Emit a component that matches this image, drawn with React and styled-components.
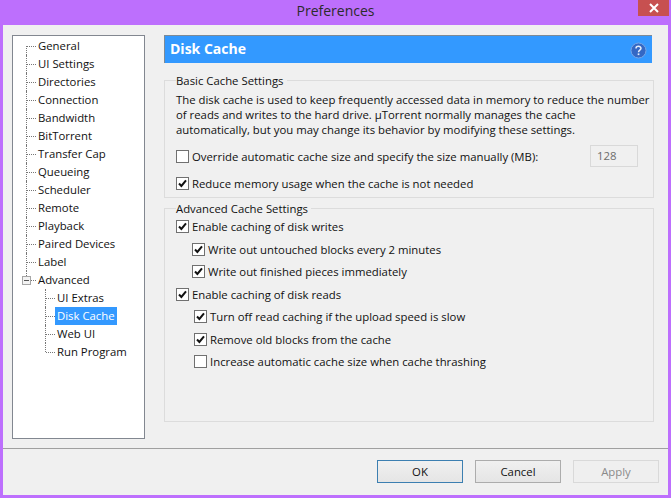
import React from "react"
import styled, { createGlobalStyle } from "styled-components"

const GlobalStyle = createGlobalStyle`
  html, body {
    margin: 0;
    padding: 0;
    background: #bd6ffd;
  }
  body {
    font-family: "Open Sans", "Noto Sans", sans-serif;
    font-size: 11.35px;
    color: #111;
  }
`

const Frame = styled.div`
  width: 671px;
  height: 498px;
  padding: 0 3px 3px 3px;
  box-sizing: border-box;
  display: flex;
  flex-direction: column;
  overflow: hidden;
`
const TitleBar = styled.div`
  height: 25px;
  flex: none;
  display: flex;
  align-items: flex-start;
  justify-content: center;
  position: relative;
`
const Title = styled.div`
  font-size: 14px;
  line-height: 22px;
  color: #2b2b2b;
`
const CloseButton = styled.div`
  position: absolute;
  right: -1px;
  top: 0;
  width: 31px;
  height: 16px;
  background: #c75050;
  display: flex;
  align-items: center;
  justify-content: center;
`
const Client = styled.div`
  flex: 1;
  min-height: 0;
  background: #f0f0f0;
  display: flex;
  flex-direction: column;
`
const Body = styled.div`
  flex: 1;
  min-height: 0;
  display: flex;
  padding: 10px 14px 0 9px;
  gap: 19px;
`
const Tree = styled.div`
  width: 131px;
  height: 401px;
  flex: none;
  box-sizing: content-box;
  border: 1px solid #828790;
  background: #fff;
  padding-top: 1px;
`
const TreeRow = styled.div`
  position: relative;
  height: 18px;
  line-height: 18px;
  display: flex;
  align-items: center;
  padding-left: ${p => (p.$child ? 42 : 23)}px;
  white-space: nowrap;
`
const RowLines = styled.span`
  position: absolute;
  left: ${p => (p.$child ? 32 : 13)}px;
  top: ${p => (p.$first ? 9 : 0)}px;
  height: ${p => (p.$first || p.$last ? 9 : 18)}px;
  border-left: 1px dotted #777;
  &::after {
    content: "";
    position: absolute;
    left: 0;
    top: ${p => (p.$first ? 0 : 9)}px;
    width: 9px;
    border-top: 1px dotted #777;
  }
`
const Expander = styled.span`
  position: absolute;
  left: 9px;
  top: 5px;
  width: 7px;
  height: 7px;
  border: 1px solid #a6a6a6;
  background: #f3f3f3;
  &::after {
    content: "";
    position: absolute;
    left: 1px;
    top: 3px;
    width: 5px;
    height: 1px;
    background: #555;
  }
`
const TreeLabel = styled.span`
  padding: 0 2px;
  line-height: 18px;
  background: ${p => (p.$selected ? "#3399ff" : "transparent")};
  color: ${p => (p.$selected ? "#fff" : "#111")};
`
const Main = styled.div`
  flex: 1;
  min-width: 0;
  display: flex;
  flex-direction: column;
`
const Header = styled.div`
  height: 28px;
  width: 488px;
  box-sizing: border-box;
  border-top: 1px solid #7d8a96;
  border-left: 1px solid #7d8a96;
  background: #3399ff;
  color: #fff;
  font-weight: 700;
  font-size: 14px;
  display: flex;
  align-items: center;
  justify-content: space-between;
  padding: 0 5px 2px 5px;
`
const HelpBadge = styled.svg`
  margin-bottom: -3px;
`
const Group = styled.fieldset`
  margin: ${p => p.$top}px 0 0 0;
  padding: 0 0 0 11px;
  width: 490px;
  height: ${p => p.$height}px;
  box-sizing: border-box;
  border: 1px solid #dcdcdc;
  min-inline-size: 0;
`
const Legend = styled.legend`
  padding: 2px 3px 0 0;
  margin-left: 0;
  line-height: 14px;
`
const Description = styled.p`
  margin: 4px 0 0;
  line-height: 15px;
  width: 476px;
`
const CheckRow = styled.label`
  display: flex;
  align-items: center;
  height: 16px;
  margin-top: ${p => p.$gap}px;
  margin-left: ${p => p.$indent || 0}px;
  gap: 3px;
  white-space: nowrap;
`
const Box = styled.span`
  width: 11px;
  height: 11px;
  flex: none;
  border: 1px solid #707070;
  background: #fff;
  display: flex;
  align-items: center;
  justify-content: center;
`
const SizeInput = styled.span`
  width: 48px;
  height: 22px;
  box-sizing: border-box;
  margin-left: auto;
  margin-right: 15px;
  border: 1px solid #d9d9d9;
  background: #f0f0f0;
  color: #6d6d6d;
  padding-left: 6px;
  line-height: 20px;
`
const Footer = styled.div`
  height: 47px;
  flex: none;
  box-sizing: border-box;
  border-top: 1px solid #a0a0a0;
  display: flex;
  justify-content: flex-end;
  gap: 12px;
  padding: 11px 9px 0 0;
`
const Button = styled.div`
  width: 86px;
  height: 23px;
  box-sizing: border-box;
  border: 1px solid ${p => (p.$default ? "#3c7fb1" : p.$disabled ? "#d9d9d9" : "#acacac")};
  background: ${p => (p.$disabled ? "#efefef" : "linear-gradient(#f0f0f0, #e5e5e5)")};
  color: ${p => (p.$disabled ? "#8a8a8a" : "#111")};
  display: flex;
  align-items: center;
  justify-content: center;
`

const CheckMark = () => (
  <svg width="9" height="9" viewBox="0 0 9 9">
    <path d="M1 4.5 L3.4 7 L8 1.4" fill="none" stroke="#111" strokeWidth="2" />
  </svg>
)

const HelpIcon = () => (
  <HelpBadge width="17" height="17" viewBox="0 0 17 17">
    <circle cx="8.5" cy="8.5" r="7.5" fill="#3468c4" stroke="#78a6e6" />
    <path d="M6 6.4 C6 3.6 11 3.6 11 6.3 C11 8.2 8.5 8 8.5 10.2" fill="none" stroke="#e6eefa" strokeWidth="1.5" />
    <rect x="7.7" y="11.4" width="1.7" height="1.7" fill="#e6eefa" />
  </HelpBadge>
)

const Check = ({ checked, indent, gap, children }) => (
  <CheckRow $indent={indent} $gap={gap}>
    <Box>{checked && <CheckMark />}</Box>
    <span>{children}</span>
  </CheckRow>
)

const topItems = [
  "General", "UI Settings", "Directories", "Connection", "Bandwidth", "BitTorrent",
  "Transfer Cap", "Queueing", "Scheduler", "Remote", "Playback", "Paired Devices", "Label",
]
const advancedItems = ["UI Extras", "Disk Cache", "Web UI", "Run Program"]

export default function App() {
  return (
    <>
      <GlobalStyle />
      <Frame>
        <TitleBar>
          <Title>Preferences</Title>
          <CloseButton>
            <svg width="10" height="10" viewBox="0 0 10 10">
              <path d="M1 1 L9 9 M9 1 L1 9" stroke="#fff" strokeWidth="2" />
            </svg>
          </CloseButton>
        </TitleBar>
        <Client>
          <Body>
            <Tree>
              {topItems.map((item, i) => (
                <TreeRow key={item}>
                  <RowLines $first={i === 0} />
                  <TreeLabel>{item}</TreeLabel>
                </TreeRow>
              ))}
              <TreeRow>
                <RowLines $last />
                <Expander />
                <TreeLabel>Advanced</TreeLabel>
              </TreeRow>
              {advancedItems.map((item, i) => (
                <TreeRow key={item} $child>
                  <RowLines $child $last={i === advancedItems.length - 1} />
                  <TreeLabel $selected={item === "Disk Cache"}>{item}</TreeLabel>
                </TreeRow>
              ))}
            </Tree>
            <Main>
              <Header>
                <span>Disk Cache</span>
                <HelpIcon />
              </Header>
              <Group $top={9} $height={126}>
                <Legend>Basic Cache Settings</Legend>
                <Description>
                  The disk cache is used to keep frequently accessed data in memory to reduce the number
                  of reads and writes to the hard drive. µTorrent normally manages the cache
                  automatically, but you may change its behavior by modifying these settings.
                </Description>
                <CheckRow $gap={11}>
                  <Box />
                  <span>Override automatic cache size and specify the size manually (MB):</span>
                  <SizeInput>128</SizeInput>
                </CheckRow>
                <Check checked gap={11}>Reduce memory usage when the cache is not needed</Check>
              </Group>
              <Group $top={2} $height={222}>
                <Legend>Advanced Cache Settings</Legend>
                <Check checked gap={2}>Enable caching of disk writes</Check>
                <Check checked indent={16} gap={7}>Write out untouched blocks every 2 minutes</Check>
                <Check checked indent={16} gap={6}>Write out finished pieces immediately</Check>
                <Check checked gap={7}>Enable caching of disk reads</Check>
                <Check checked indent={18} gap={6}>Turn off read caching if the upload speed is slow</Check>
                <Check checked indent={18} gap={7}>Remove old blocks from the cache</Check>
                <Check indent={18} gap={6}>Increase automatic cache size when cache thrashing</Check>
              </Group>
            </Main>
          </Body>
          <Footer>
            <Button $default>OK</Button>
            <Button>Cancel</Button>
            <Button $disabled>Apply</Button>
          </Footer>
        </Client>
      </Frame>
    </>
  )
}
